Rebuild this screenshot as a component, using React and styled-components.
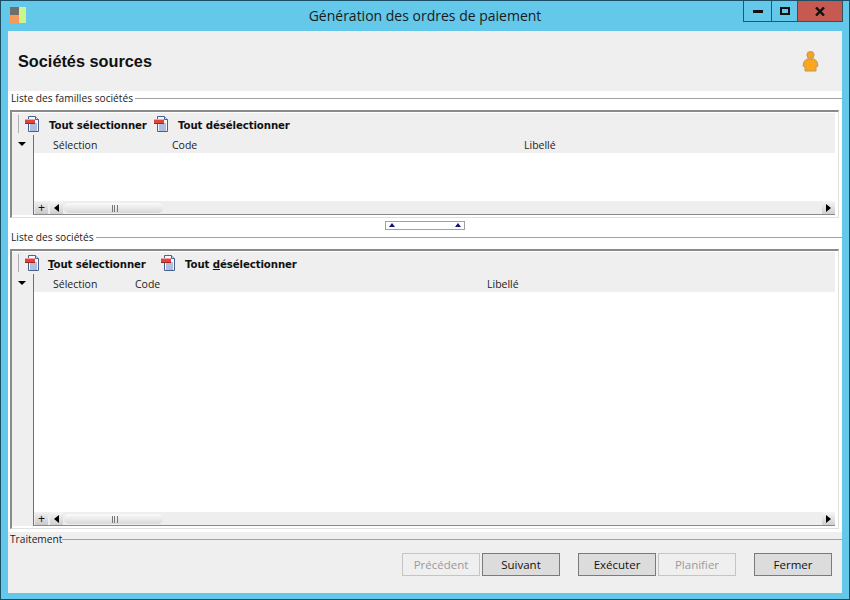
import React from 'react'
import styled, { createGlobalStyle } from 'styled-components'

const Global = createGlobalStyle`
  html, body {
    margin: 0;
    padding: 0;
    background: #63c8ea;
  }
  * {
    box-sizing: border-box;
  }
`

const Frame = styled.div`
  width: 850px;
  height: 600px;
  background: #63c8ea;
  border: 1px solid #1c4f66;
  display: flex;
  flex-direction: column;
  overflow: hidden;
  font-family: "Liberation Sans", Arial, sans-serif;
  font-size: 11px;
  color: #111;
`

const TitleBar = styled.div`
  height: 30px;
  flex: none;
  display: grid;
  grid-template-columns: 1fr auto 1fr;
  padding: 0 6px;
`

const AppLogo = styled.div`
  width: 16px;
  height: 16px;
  margin: 6px 0 0 3px;
  display: grid;
  grid-template-columns: 9px 7px;
  grid-template-rows: 8px 8px;
`

const LogoPart = styled.span`
  background: ${p => p.$color};
  grid-row: ${p => p.$row};
`

const Title = styled.div`
  font-family: "Open Sans", sans-serif;
  font-size: 14px;
  line-height: 30px;
  color: #1a1a1a;
`

const WinButtons = styled.div`
  justify-self: end;
  display: flex;
  height: 21px;
  border: 1px solid #2a5468;
  border-top: none;
`

const WinButton = styled.div`
  width: ${p => p.$w}px;
  display: flex;
  align-items: center;
  justify-content: center;
  background: ${p => p.$close ? '#c75a50' : 'transparent'};
  border-left: ${p => p.$first ? 'none' : '1px solid #2a5468'};
`

const Client = styled.div`
  flex: 1;
  margin: 0 7px 6px 7px;
  background: #fff;
  display: flex;
  flex-direction: column;
  min-height: 0;
`

const Header = styled.div`
  height: 60px;
  flex: none;
  background: #efeff0;
  display: flex;
  align-items: center;
  justify-content: space-between;
  padding: 0 23px 0 10px;
`

const Heading = styled.h1`
  margin: 0;
  font-size: 16.3px;
  font-weight: bold;
  color: #111;
`

const Main = styled.div`
  height: 441px;
  flex: none;
  padding-left: 2px;
  display: flex;
  flex-direction: column;
`

const GroupLabel = styled.div`
  height: 14px;
  margin: 0 0 5px 1px;
  display: flex;
  align-items: center;
  gap: 2px;
  font-family: "Open Sans", sans-serif;
  font-size: 10.2px;
  color: #222;
  white-space: nowrap;

  &::after {
    content: "";
    flex: 1;
    height: 1px;
    background: #a0a0a0;
  }
`

const Panel = styled.div`
  width: 829px;
  height: ${p => p.$h}px;
  flex: none;
  border-top: 2px solid #8a8a8a;
  border-left: 2px solid #8a8a8a;
  border-right: 1px solid #e0e0e0;
  border-bottom: 1px solid #e0e0e0;
  padding: 1px 3px 2px 0;
  display: flex;
  flex-direction: column;
`

const Toolbar = styled.div`
  height: 22px;
  flex: none;
  background: #efefef;
  display: flex;
  align-items: center;
  padding-left: 6px;
`

const Grip = styled.span`
  width: 1px;
  height: 18px;
  background: #b0b0b0;
  margin-right: 6px;
`

const ToolButton = styled.div`
  display: flex;
  align-items: center;
  width: ${p => p.$w}px;
  flex: none;
`

const ToolText = styled.span`
  margin-left: ${p => p.$gap}px;
  padding-top: 2px;
  font-family: "DejaVu Sans", sans-serif;
  font-size: 10.2px;
  font-weight: bold;
  letter-spacing: -0.1px;
  white-space: nowrap;
  color: #111;
`

const Grid = styled.div`
  flex: 1;
  min-height: 0;
  display: grid;
  grid-template-columns: 21px 1fr;
  grid-template-rows: 18px 1fr 14px;
`

const Gutter = styled.div`
  grid-row: 1 / 4;
  background: #efefef;
  display: flex;
  justify-content: center;
  padding-top: 7px;
  padding-right: 2px;
`

const Columns = styled.div`
  background: #efefef;
  border-left: 1px solid #707070;
  display: flex;
  align-items: center;
  padding: 2px 0 0 19px;
  font-family: "Open Sans", sans-serif;
  font-size: 10.5px;
  color: #222;
`

const Column = styled.span`
  width: ${p => p.$w}px;
  flex: none;
`

const Rows = styled.div`
  background: #fff;
  border-left: 1px solid #707070;
`

const ScrollRow = styled.div`
  background: #eee;
  border-left: 1px solid #707070;
  border-bottom: 1px solid #8a8a8a;
  padding-left: 1px;
  display: flex;
  align-items: stretch;
`

const ExpandBox = styled.div`
  width: 13px;
  flex: none;
  margin-right: 2px;
  padding-top: 1px;
  background: linear-gradient(#f2f2f2, #c9c9c9);
  font-size: 12px;
  line-height: 12px;
  text-align: center;
  color: #111;
`

const ArrowBox = styled.div`
  width: 13px;
  flex: none;
  background: linear-gradient(#f6f6f6, #cfcfcf);
  display: flex;
  align-items: center;
  justify-content: center;
`

const Track = styled.div`
  flex: 1;
  padding: 2px 0 0 1px;
`

const Thumb = styled.div`
  width: 99px;
  height: 10px;
  border-radius: 5px;
  background: linear-gradient(#fbfbfb, #d8d8d8);
  display: flex;
  align-items: center;
  justify-content: center;
  gap: 1.5px;
  padding-left: 2px;
`

const ThumbTick = styled.span`
  width: 1px;
  height: 7px;
  background: #777;
`

const Splitter = styled.div`
  height: 12px;
  flex: none;
  padding: 3px 0 0 375px;
`

const SplitterHandle = styled.div`
  width: 80px;
  height: 9px;
  border: 1px solid #a0a0a0;
  background: #fff;
  display: flex;
  justify-content: space-between;
  padding: 1px 3px 0;
`

const Footer = styled.div`
  flex: 1;
  background: #efefef;
`

const FooterLabel = styled(GroupLabel)`
  height: 14px;
  margin: 0 0 7px 2px;
  gap: 0;
`

const ButtonBar = styled.div`
  display: flex;
  justify-content: flex-end;
  padding-right: 10px;
`

const Button = styled.button`
  width: 78px;
  height: 23px;
  margin-left: ${p => p.$gap ?? 0}px;
  padding: 0;
  background: ${p => p.disabled ? '#efefef' : '#dcdcdc'};
  border: 1px solid ${p => p.disabled ? '#c4c4c4' : '#7a7a7a'};
  color: ${p => p.disabled ? '#9a9a9a' : '#111'};
  font-family: "Open Sans", sans-serif;
  font-size: 11.5px;
`

const DocIcon = () => (
  <svg width="15" height="16" viewBox="0 0 15 16">
    <path d="M3.5.5h7l3 3v12h-10z" fill="#f4f7fc" stroke="#46608f" />
    <path d="M10.5.5v3h3" fill="#d7e2f3" stroke="#46608f" />
    <path d="M5 8h7M5 10h7M5 12h7M5 14h7" stroke="#6a86bd" />
    <rect x="0" y="3" width="10" height="5" fill="#e0443c" />
    <rect x="0" y="3" width="10" height="1" fill="#f5a09a" />
    <rect x="0" y="7" width="10" height="1" fill="#a52620" />
  </svg>
)

const Person = () => (
  <svg width="17" height="21" viewBox="0 0 17 21">
    <circle cx="8.5" cy="4" r="3.6" fill="#f7a51f" stroke="#c9964a" />
    <path d="M5 8h7l3 2.5 1 4.5-2 .8V20H3v-4.2L1 15l1-4.5z" fill="#fba71d" stroke="#c0965a" />
  </svg>
)

const Triangle = ({ dir, color = '#000' }) => {
  const pts = {
    down: '0,0 8,0 4,4',
    up: '0,4 6,4 3,0',
    left: '5,0 5,8 0,4',
    right: '0,0 0,8 5,4',
  }[dir]
  const size = { down: [8, 4], up: [6, 4], left: [5, 8], right: [5, 8] }[dir]
  return (
    <svg width={size[0]} height={size[1]} viewBox={`0 0 ${size[0]} ${size[1]}`}>
      <polygon points={pts} fill={color} />
    </svg>
  )
}

const DataPanel = ({ height, toolWidth, firstGap, secondGap, first, second, selWidth }) => (
  <Panel $h={height}>
    <Toolbar>
      <Grip />
      <ToolButton $w={toolWidth}>
        <DocIcon />
        <ToolText $gap={firstGap}>{first}</ToolText>
      </ToolButton>
      <ToolButton>
        <DocIcon />
        <ToolText $gap={secondGap}>{second}</ToolText>
      </ToolButton>
    </Toolbar>
    <Grid>
      <Gutter><Triangle dir="down" /></Gutter>
      <Columns>
        <Column $w={selWidth}>Sélection</Column>
        <Column $w={352}>Code</Column>
        <Column>Libellé</Column>
      </Columns>
      <Rows />
      <ScrollRow>
        <ExpandBox>+</ExpandBox>
        <ArrowBox><Triangle dir="left" /></ArrowBox>
        <Track>
          <Thumb>
            <ThumbTick /><ThumbTick /><ThumbTick />
          </Thumb>
        </Track>
        <ArrowBox><Triangle dir="right" /></ArrowBox>
      </ScrollRow>
    </Grid>
  </Panel>
)

const App = () => (
  <Frame>
    <Global />
    <TitleBar>
      <AppLogo>
        <LogoPart $color="#6e6e6e" $row="1" />
        <LogoPart $color="#cdf58e" $row="1 / 3" />
        <LogoPart $color="#f79a5a" $row="2" />
      </AppLogo>
      <Title>Génération des ordres de paiement</Title>
      <WinButtons>
        <WinButton $w={27} $first>
          <svg width="10" height="3"><rect width="10" height="3" fill="#111" /></svg>
        </WinButton>
        <WinButton $w={26}>
          <svg width="10" height="8"><rect x="1" y="1" width="8" height="6" fill="none" stroke="#111" strokeWidth="2" /></svg>
        </WinButton>
        <WinButton $w={45} $close>
          <svg width="10" height="9"><path d="M1 0.5l8 8M9 0.5l-8 8" stroke="#111" strokeWidth="2.4" fill="none" /></svg>
        </WinButton>
      </WinButtons>
    </TitleBar>
    <Client>
      <Header>
        <Heading>Sociétés sources</Heading>
        <Person />
      </Header>
      <Main>
        <GroupLabel>Liste des familles sociétés</GroupLabel>
        <DataPanel
          height={108}
          toolWidth={129}
          firstGap={9}
          secondGap={9}
          selWidth={119}
          first="Tout sélectionner"
          second="Tout désélectionner"
        />
        <Splitter>
          <SplitterHandle>
            <Triangle dir="up" color="#10107a" />
            <Triangle dir="up" color="#10107a" />
          </SplitterHandle>
        </Splitter>
        <GroupLabel>Liste des sociétés</GroupLabel>
        <DataPanel
          height={280}
          toolWidth={136}
          firstGap={8}
          secondGap={9}
          selWidth={82}
          first={<><u>T</u>out sélectionner</>}
          second={<>Tout <u>d</u>ésélectionner</>}
        />
      </Main>
      <Footer>
        <FooterLabel>Traitement</FooterLabel>
        <ButtonBar>
          <Button disabled>Précédent</Button>
          <Button $gap={2}>Suivant</Button>
          <Button $gap={18}>Exécuter</Button>
          <Button $gap={2} disabled>Planifier</Button>
          <Button $gap={18}>Fermer</Button>
        </ButtonBar>
      </Footer>
    </Client>
  </Frame>
)

export default App
